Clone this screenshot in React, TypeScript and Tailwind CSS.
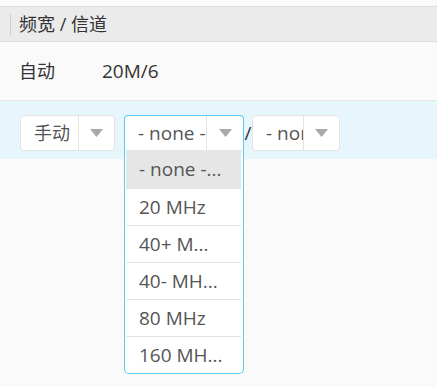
import React from "react";

const font = { fontFamily: '"Open Sans", "Noto Sans CJK SC", sans-serif' };

function Arrow() {
  return (
    <svg width="13" height="8" viewBox="0 0 13 8" className="block">
      <polygon points="0,0 13,0 6.5,8" fill="#a9a9a9" />
    </svg>
  );
}

function Select({
  label,
  width,
  textWidth,
  latin,
  active,
  children,
}: {
  label: string;
  width: string;
  textWidth: string;
  latin?: boolean;
  active?: boolean;
  children?: React.ReactNode;
}) {
  return (
    <div className={`relative ${width}`}>
      <div
        className={`flex h-[36px] items-stretch border bg-white ${
          active ? "rounded-t-[4px] border-[#5ccbf4] border-b-[#e6e6e6]" : "rounded-[4px] border-[#e3e3e3]"
        }`}
      >
        <div
          className={`${textWidth} ${latin ? "text-[19px]" : ""} flex items-center overflow-hidden whitespace-nowrap border-r border-[#e3e3e3] pl-[13px] text-[#555]`}
        >
          {label}
        </div>
        <div className="flex flex-1 items-center justify-center">
          <Arrow />
        </div>
      </div>
      {children}
    </div>
  );
}

const items = ["- none -...", "20 MHz", "40+ M...", "40- MH...", "80 MHz", "160 MH..."];

export default function App() {
  return (
    <div className="min-h-[387px] w-[437px] bg-[#fafafa] pt-[6px] text-[18px]" style={font}>
      <div className="flex h-[36px] items-center border-y border-[#dcdcdc] bg-[#ebebeb]">
        <div className="ml-[10px] h-[21px] w-[1px] bg-[#cdcdcd]" />
        <div className="ml-[8px] text-[#333]">频宽 / 信道</div>
      </div>
      <div className="flex h-[59px] items-center border-b border-[#e8e8e8] pl-[19px] text-[#333]">
        <div className="w-[83px]">自动</div>
        <div className="text-[19px]">20M/6</div>
      </div>
      <div className="flex h-[58px] items-start bg-[#e7f6fd] pl-[20px] pt-[14px]">
        <Select label="手动" width="w-[95px]" textWidth="w-[58px]" />
        <div className="w-[9px]" />
        <Select label="- none -" width="w-[120px]" textWidth="w-[82px]" latin active>
          <div className="absolute left-0 right-0 top-full z-10 rounded-b-[5px] border border-t-0 border-[#5ccbf4] bg-white pl-[1px] pr-[2px]">
            {items.map((t, i) => (
              <div
                key={t}
                className={`flex h-[37px] items-center whitespace-nowrap pl-[13px] text-[19px] text-[#555] ${
                  i === 0 ? "bg-[#e6e6e6]" : "border-t border-[#e3e3e3]"
                }`}
              >
                {t}
              </div>
            ))}
          </div>
        </Select>
        <div className="flex h-[36px] w-[8px] items-center justify-center text-[19px] text-[#333]">/</div>
        <Select label="- none -" width="w-[88px]" textWidth="w-[51px]" latin />
      </div>
    </div>
  );
}
